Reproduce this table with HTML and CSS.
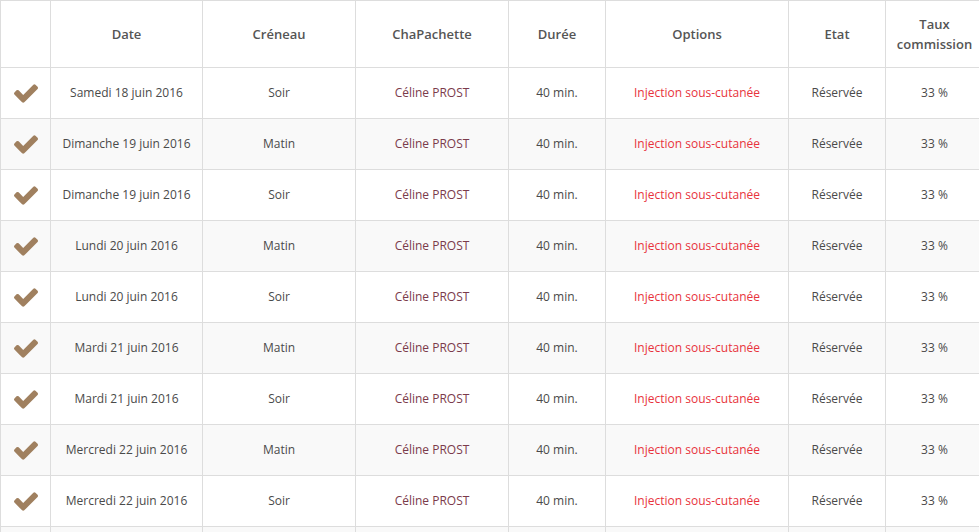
FILE: index.html
```html
<!DOCTYPE html>
<html lang="fr">
<head>
<meta charset="utf-8">
<link rel="stylesheet" href="styles.css">
</head>
<body>
<svg class="defs" width="0" height="0" aria-hidden="true">
  <symbol id="chk" viewBox="121 334 1550 1188">
    <path d="M1671 566q0 40-28 68l-724 724-136 136q-28 28-68 28t-68-28l-136-136-362-362q-28-28-28-68t28-68l136-136q28-28 68-28t68 28l294 295 656-657q28-28 68-28t68 28l136 136q28 28 28 68z"/>
  </symbol>
</svg>
<table class="grid">
  <colgroup>
    <col class="c-ico"><col class="c-date"><col class="c-cren"><col class="c-cha"><col class="c-dur"><col class="c-opt"><col class="c-etat"><col class="c-taux">
  </colgroup>
  <thead>
    <tr>
      <th></th><th>Date</th><th>Créneau</th><th>ChaPachette</th><th>Durée</th><th>Options</th><th>Etat</th><th>Taux commission</th>
    </tr>
  </thead>
  <tbody>
    <tr><td><svg class="ico"><use href="#chk"/></svg></td><td>Samedi 18 juin 2016</td><td>Soir</td><td class="name">Céline PROST</td><td>40 min.</td><td class="opt">Injection sous-cutanée</td><td>Réservée</td><td>33 %</td></tr>
    <tr><td><svg class="ico"><use href="#chk"/></svg></td><td>Dimanche 19 juin 2016</td><td>Matin</td><td class="name">Céline PROST</td><td>40 min.</td><td class="opt">Injection sous-cutanée</td><td>Réservée</td><td>33 %</td></tr>
    <tr><td><svg class="ico"><use href="#chk"/></svg></td><td>Dimanche 19 juin 2016</td><td>Soir</td><td class="name">Céline PROST</td><td>40 min.</td><td class="opt">Injection sous-cutanée</td><td>Réservée</td><td>33 %</td></tr>
    <tr><td><svg class="ico"><use href="#chk"/></svg></td><td>Lundi 20 juin 2016</td><td>Matin</td><td class="name">Céline PROST</td><td>40 min.</td><td class="opt">Injection sous-cutanée</td><td>Réservée</td><td>33 %</td></tr>
    <tr><td><svg class="ico"><use href="#chk"/></svg></td><td>Lundi 20 juin 2016</td><td>Soir</td><td class="name">Céline PROST</td><td>40 min.</td><td class="opt">Injection sous-cutanée</td><td>Réservée</td><td>33 %</td></tr>
    <tr><td><svg class="ico"><use href="#chk"/></svg></td><td>Mardi 21 juin 2016</td><td>Matin</td><td class="name">Céline PROST</td><td>40 min.</td><td class="opt">Injection sous-cutanée</td><td>Réservée</td><td>33 %</td></tr>
    <tr><td><svg class="ico"><use href="#chk"/></svg></td><td>Mardi 21 juin 2016</td><td>Soir</td><td class="name">Céline PROST</td><td>40 min.</td><td class="opt">Injection sous-cutanée</td><td>Réservée</td><td>33 %</td></tr>
    <tr><td><svg class="ico"><use href="#chk"/></svg></td><td>Mercredi 22 juin 2016</td><td>Matin</td><td class="name">Céline PROST</td><td>40 min.</td><td class="opt">Injection sous-cutanée</td><td>Réservée</td><td>33 %</td></tr>
    <tr><td><svg class="ico"><use href="#chk"/></svg></td><td>Mercredi 22 juin 2016</td><td>Soir</td><td class="name">Céline PROST</td><td>40 min.</td><td class="opt">Injection sous-cutanée</td><td>Réservée</td><td>33 %</td></tr>
    <tr class="partial"><td></td><td></td><td></td><td></td><td></td><td></td><td></td><td></td></tr>
  </tbody>
</table>
</body>
</html>
```
FILE: styles.css
```css
html, body {
  margin: 0;
  padding: 0;
  background: #fff;
  overflow: hidden;
}
body {
  font-family: "Open Sans", "Liberation Sans", sans-serif;
  font-size: 12px;
  color: #4a4a4a;
}
.defs {
  position: absolute;
  width: 0;
  height: 0;
}
.grid {
  border-collapse: collapse;
  table-layout: fixed;
  width: 983px;
}
.c-ico { width: 50px; }
.c-date { width: 152px; }
.c-cren { width: 153px; }
.c-cha { width: 153px; }
.c-dur { width: 97px; }
.c-opt { width: 183px; }
.c-etat { width: 97px; }
.c-taux { width: 98px; }
.grid th,
.grid td {
  border: 1px solid #ddd;
  text-align: center;
  vertical-align: middle;
  padding: 0 8px;
}
.grid th {
  height: 66px;
  font-size: 13px;
  font-weight: 600;
  line-height: 20px;
  color: #555;
}
.grid td {
  height: 50px;
  line-height: 18px;
}
.grid tbody tr:nth-child(even) td {
  background: #f9f9f9;
}
.grid td.name { color: #7b3b4b; }
.grid td.opt { color: #e8333c; }
.ico {
  display: block;
  width: 24px;
  height: 19px;
  margin: 1px auto 0;
  fill: #a0805f;
}
```
